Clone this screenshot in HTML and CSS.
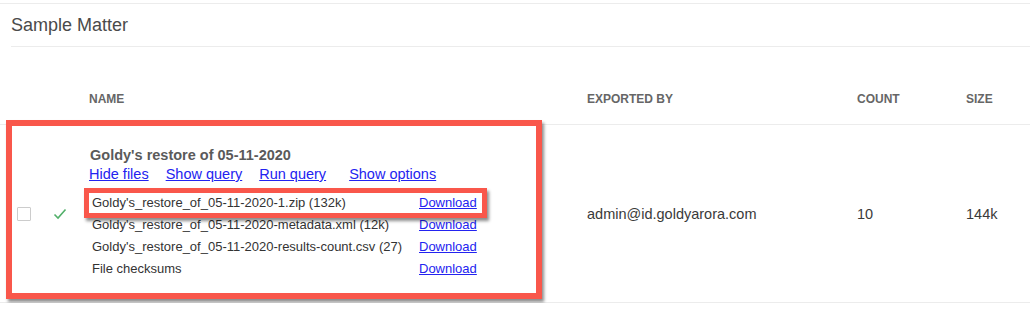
FILE: index.html
```html
<!DOCTYPE html>
<html>
<head>
    <title>Sample Matter - Exports</title>
    <link rel="stylesheet" href="styles.css">
</head>
<body>
    <div class="card">
        <h2 class="matter-title">Sample Matter</h2>

        <div class="export-row header-row">
            <div></div>
            <div></div>
            <div class="col-head">Name</div>
            <div class="col-head">Exported by</div>
            <div class="col-head">Count</div>
            <div class="col-head">Size</div>
        </div>

        <div class="export-row body-row">
            <div class="cell-mid"><span class="checkbox"></span></div>
            <div class="cell-mid">
                <svg class="done-icon" width="14" height="12" viewBox="0 0 14 12">
                    <polyline points="1.5,6.5 5,10 12.5,1.5" fill="none" stroke="#52b06a" stroke-width="1.6"/>
                </svg>
            </div>
            <div class="name-cell">
                <div class="export-title">Goldy's restore of 05-11-2020</div>
                <div class="export-links">
                    <a href="#">Hide files</a>
                    <a href="#">Show query</a>
                    <a href="#">Run query</a>
                    <a href="#" class="wide">Show options</a>
                </div>
                <div class="file-list">
                    <span>Goldy's_restore_of_05-11-2020-1.zip (132k)</span><a href="#">Download</a>
                    <span>Goldy's_restore_of_05-11-2020-metadata.xml (12k)</span><a href="#">Download</a>
                    <span>Goldy's_restore_of_05-11-2020-results-count.csv (27)</span><a href="#">Download</a>
                    <span>File checksums</span><a href="#">Download</a>
                </div>
            </div>
            <div class="cell-mid">admin@id.goldyarora.com</div>
            <div class="cell-mid">10</div>
            <div class="cell-mid">144k</div>
        </div>
    </div>

    <!-- annotation boxes drawn over the screenshot -->
    <div class="mark mark-row"></div>
    <div class="mark mark-file"></div>
</body>
</html>
```

FILE: styles.css
```css
body {
    margin: 0;
    background-color: #ffffff;
    color: #333333;
    font-family: "Liberation Sans", Arial, sans-serif;
    position: relative;
}
a {
    color: #2323f0;
    text-decoration: underline;
}
.card {
    margin-top: 3px;
    border-top: 1px solid #ececec;
}
.matter-title {
    margin: 0 0 0 11px;
    height: 42px;
    line-height: 42px;
    font-size: 18px;
    font-weight: normal;
    color: #4a4a4a;
    border-bottom: 1px solid #ececec;
}
.export-row {
    display: grid;
    grid-template-columns: 36px 36px 498px 270px 109px 1fr;
    padding-left: 17px;
    border-bottom: 1px solid #ececec;
}
.header-row {
    height: 77px;
    align-items: end;
}
.col-head {
    padding-bottom: 18px;
    font-size: 12px;
    font-weight: bold;
    text-transform: uppercase;
    color: #666666;
}
.body-row {
    height: 177px;
    font-size: 14.5px;
}
.cell-mid {
    display: flex;
    align-items: center;
    color: #3a3a3a;
}
.checkbox {
    display: block;
    width: 12px;
    height: 12px;
    border: 1px solid #cccccc;
    border-radius: 1px;
}
.done-icon {
    display: block;
}
.name-cell {
    padding-top: 21px;
}
.export-title {
    height: 18px;
    line-height: 18px;
    font-weight: bold;
    color: #5a5a5a;
    padding-left: 1px;
}
.export-links {
    display: flex;
    line-height: 20px;
    height: 20px;
}
.export-links a {
    margin-right: 17px;
}
.export-links a.wide {
    margin-left: 6px;
}
.file-list {
    display: grid;
    grid-template-columns: 327px auto;
    margin-top: 8px;
    padding-left: 3px;
    font-size: 13px;
    line-height: 22px;
    color: #333333;
    justify-items: start;
}
.mark {
    position: absolute;
    border-style: solid;
    border-color: #f9574b;
    box-shadow: 2px 3px 3px rgba(0, 0, 0, 0.45);
    pointer-events: none;
}
.mark-row {
    left: 6px;
    top: 120px;
    width: 524px;
    height: 167px;
    border-width: 6px;
}
.mark-file {
    left: 84px;
    top: 188px;
    width: 393px;
    height: 20px;
    border-width: 5px;
}
```
